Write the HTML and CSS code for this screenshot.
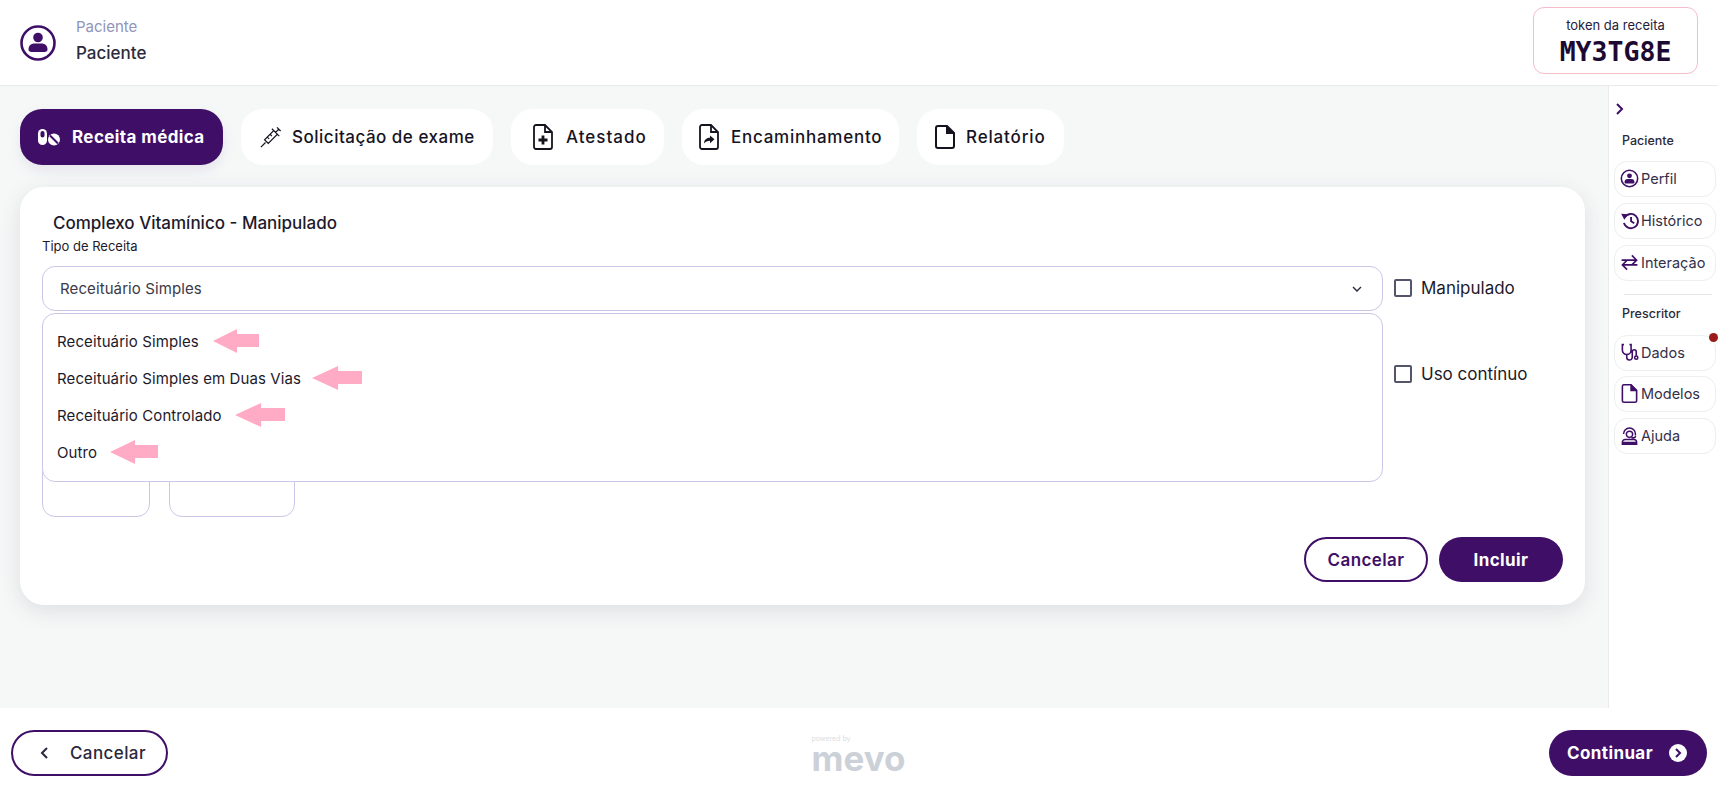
FILE: index.html
```html
<!DOCTYPE html>
<html lang="pt-BR">
<head>
<meta charset="utf-8">
<title>Receita</title>
<link rel="stylesheet" href="styles.css">
</head>
<body>
<header class="topbar">
  <div class="patient">
    <svg class="patient-icon" viewBox="0 0 36 36"><circle cx="18" cy="18" r="16.500" fill="none" stroke="#3f0f68" stroke-width="2.600"/><circle cx="18" cy="12.500" r="4.800" fill="#3f0f68"/><path d="M8.500 24.500c0-4 2.600-6 6-6h7c3.400 0 6 2 6 6 0 1.600-1.200 2.500-3 2.500H11.500c-1.800 0-3-.9-3-2.500z" fill="#3f0f68"/></svg>
    <div class="patient-text">
      <span class="patient-label">Paciente</span>
      <span class="patient-name">Paciente</span>
    </div>
  </div>
  <div class="token">
    <span class="token-label">token da receita</span>
    <span class="token-code">MY3TG8E</span>
  </div>
</header>

<div class="middle">
  <main class="content">
    <nav class="tabs">
      <a class="tab tab-active tab-receita">
        <svg class="tab-icon tab-pill" viewBox="0 0 24 18"><path d="M1 5.500a4.500 4.500 0 0 1 9 0v7a4.500 4.500 0 0 1-9 0z" fill="#fff"/><rect x="3.500" y="3" width="4" height="6.500" rx="2" fill="#3f0f68"/><circle cx="17" cy="11.500" r="6" fill="#fff"/><path d="M13 7.500l8 8" stroke="#3f0f68" stroke-width="2"/></svg>
        Receita médica
      </a>
      <a class="tab tab-sol">
        <svg class="tab-icon" viewBox="0 0 24 24" fill="none" stroke="#16131f" stroke-width="1.300"><path d="M1 23l5-5M5 15l4 4L19 9l-4-4zM13 3l8 8M18.500 1.500l4 4M17 7l3.500-3.500M8 12l2 2M11 9l2 2"/></svg>
        Solicitação de exame
      </a>
      <a class="tab tab-ates">
        <svg class="tab-icon tab-doc" viewBox="0 0 20 26" fill="none" stroke="#16131f" stroke-width="1.800"><path d="M3 1h9l7 7v15a2 2 0 0 1-2 2H3a2 2 0 0 1-2-2V3a2 2 0 0 1 2-2z"/><path d="M12 1v7h7"/><path d="M10 11.500v9M5.500 16h9" stroke-width="2.800"/></svg>
        Atestado
      </a>
      <a class="tab tab-enc">
        <svg class="tab-icon tab-doc" viewBox="0 0 20 26" fill="none" stroke="#16131f" stroke-width="1.800"><path d="M3 1h9l7 7v15a2 2 0 0 1-2 2H3a2 2 0 0 1-2-2V3a2 2 0 0 1 2-2z"/><path d="M12 1v7h7"/><path d="M5 19c.4-3.600 3-5.200 6-5.200v-2.400l4.500 3.900-4.500 3.900v-2.400c-2.600 0-4.600.8-6 2.600z" fill="#16131f" stroke="none"/></svg>
        Encaminhamento
      </a>
      <a class="tab tab-rel">
        <svg class="tab-icon tab-doc" viewBox="0 0 20 24" fill="none" stroke="#16131f" stroke-width="2"><path d="M3 1h9l7 7v13a2 2 0 0 1-2 2H3a2 2 0 0 1-2-2V3a2 2 0 0 1 2-2z"/><path d="M12 1v7h7" fill="#16131f"/></svg>
        Relatório
      </a>
    </nav>

    <section class="card">
      <h1 class="card-title">Complexo Vitamínico - Manipulado</h1>
      <label class="field-label">Tipo de Receita</label>
      <div class="form-row">
        <div class="select">
          <span>Receituário Simples</span>
          <svg class="select-chevron" viewBox="0 0 10 6" fill="none" stroke="#2a2740" stroke-width="1.400"><path d="M1 1l4 4 4-4"/></svg>
          <ul class="dropdown">
            <li class="option">Receituário Simples<svg class="arrow arrow-a" viewBox="0 0 46 24" preserveAspectRatio="none"><path d="M0 12L24 0v5h22v13H24v6z" fill="#ffabc6"/></svg></li>
            <li class="option">Receituário Simples em Duas Vias<svg class="arrow arrow-b" viewBox="0 0 46 24" preserveAspectRatio="none"><path d="M0 12L24 0v5h22v13H24v6z" fill="#ffabc6"/></svg></li>
            <li class="option">Receituário Controlado<svg class="arrow arrow-c" viewBox="0 0 46 24" preserveAspectRatio="none"><path d="M0 12L24 0v5h22v13H24v6z" fill="#ffabc6"/></svg></li>
            <li class="option">Outro<svg class="arrow arrow-d" viewBox="0 0 46 24" preserveAspectRatio="none"><path d="M0 12L24 0v5h22v13H24v6z" fill="#ffabc6"/></svg></li>
          </ul>
        </div>
        <label class="check"><span class="check-box"></span>Manipulado</label>
      </div>
      <div class="form-row form-row-second">
        <div class="select select-blank"></div>
        <label class="check"><span class="check-box"></span>Uso contínuo</label>
      </div>
      <div class="small-fields">
        <div class="small-field small-field-a"></div>
        <div class="small-field small-field-b"></div>
      </div>
      <div class="actions">
        <button class="btn btn-outline">Cancelar</button>
        <button class="btn btn-solid">Incluir</button>
      </div>
    </section>
  </main>

  <aside class="sidebar">
    <svg class="side-toggle" viewBox="0 0 10 14" fill="none" stroke="#3f0f68" stroke-width="2"><path d="M2 2l5 5-5 5"/></svg>
    <h2 class="side-title">Paciente</h2>
    <a class="side-btn">
      <svg class="side-icon" viewBox="0 0 36 36"><circle cx="18" cy="18" r="15.500" fill="none" stroke="#3f0f68" stroke-width="3"/><circle cx="18" cy="13" r="4.600" fill="#3f0f68"/><path d="M8.500 25c0-4 2.600-6 6-6h7c3.400 0 6 2 6 6 0 1.600-1.200 2.500-3 2.500H11.500c-1.800 0-3-.9-3-2.500z" fill="#3f0f68"/></svg>
      <span>Perfil</span>
    </a>
    <a class="side-btn">
      <svg class="side-icon" viewBox="0 0 24 24" fill="none" stroke="#3f0f68" stroke-width="2.400"><path d="M6 8a9 9 0 1 1-1 7"/><path d="M1.500 3.500L10 4 5.500 11z" fill="#3f0f68" stroke="none"/><path d="M14 7.500V13l4 2.500"/></svg>
      <span>Histórico</span>
    </a>
    <a class="side-btn">
      <svg class="side-icon" viewBox="0 0 24 24" fill="none" stroke="#3f0f68" stroke-width="2"><path d="M2 9h19M15 3l6 6-6 6M22 15H3M9 9l-6 6 6 6"/></svg>
      <span>Interação</span>
    </a>
    <hr class="side-divider">
    <h2 class="side-title side-title-second">Prescritor</h2>
    <a class="side-btn side-btn-alert">
      <svg class="side-icon" viewBox="0 0 24 24" fill="none" stroke="#3f0f68" stroke-width="2"><path d="M5 2H3v7a5.500 5.500 0 0 0 11 0V2h-2M8.500 14.500V18a3.500 3.500 0 0 0 7 0V11a2.500 2.500 0 0 1 5 0v5"/><circle cx="20.500" cy="18.500" r="2"/></svg>
      <span>Dados</span>
    </a>
    <a class="side-btn">
      <svg class="side-icon" viewBox="0 0 20 24" fill="none" stroke="#3f0f68" stroke-width="2"><path d="M3 1h9l7 7v13a2 2 0 0 1-2 2H3a2 2 0 0 1-2-2V3a2 2 0 0 1 2-2z"/><path d="M12 1v7h7" fill="#3f0f68"/></svg>
      <span>Modelos</span>
    </a>
    <a class="side-btn">
      <svg class="side-icon" viewBox="0 0 24 24" fill="none" stroke="#3f0f68" stroke-width="1.900"><path d="M4.500 10a7.500 7.500 0 0 1 15 0v2M19.500 12.500c0 1.500-1.500 2.500-3 2.500h-2"/><path d="M8 10.500a4 4 0 1 1 8 0 4 4 0 0 1-8 0z"/><path d="M3 23v-2.500a3.500 3.500 0 0 1 3.500-3.500h11a3.500 3.500 0 0 1 3.500 3.500V23zM3 21h18"/></svg>
      <span>Ajuda</span>
    </a>
  </aside>
</div>

<footer class="footer">
  <button class="foot-btn foot-cancel">
    <svg class="foot-chevron" viewBox="0 0 10 14" fill="none" stroke="#2a2740" stroke-width="2"><path d="M8 2L3 7l5 5"/></svg>
    Cancelar
  </button>
  <div class="logo">
    <span class="logo-small">powered by</span>
    <span class="logo-word">mevo</span>
  </div>
  <button class="foot-btn foot-continue">
    Continuar
    <svg class="foot-next" viewBox="0 0 18 18"><circle cx="9" cy="9" r="9" fill="#fff"/><path d="M7 5l4 4-4 4" fill="none" stroke="#3f0f68" stroke-width="2"/></svg>
  </button>
</footer>
</body>
</html>
```

FILE: styles.css
```css
* { box-sizing: border-box; }
html, body { margin: 0; height: 100%; }
body {
  display: flex;
  flex-direction: column;
  height: 798px;
  overflow: hidden;
  background: #fff;
  color: #16131f;
  font-family: Inter, "Liberation Sans", sans-serif;
}
ul { margin: 0; padding: 0; list-style: none; }
h1, h2 { margin: 0; }
button { font-family: inherit; cursor: pointer; }

.topbar {
  height: 86px;
  flex: none;
  display: flex;
  align-items: center;
  justify-content: space-between;
  padding: 0 20px 0 20px;
  border-bottom: 1px solid #e9ebeb;
}
.patient { display: flex; align-items: center; gap: 20px; }
.patient-icon { width: 36px; height: 36px; }
.patient-text { display: flex; flex-direction: column; gap: 8px; margin-top: -6px; }
.patient-label { font-size: 15px; line-height: 18px; color: #9094b8; }
.patient-name { font-size: 17px; line-height: 18px; font-weight: 500; color: #2c2a3a; }
.token {
  width: 165px;
  height: 67px;
  margin-top: -5px;
  padding-top: 4px;
  display: flex;
  flex-direction: column;
  align-items: center;
  justify-content: center;
  gap: 3px;
  border: 1px solid #f7bcc9;
  border-radius: 11px;
}
.token-label { font-size: 13px; line-height: 17px; color: #251b3c; }
.token-code {
  font-family: "DejaVu Sans Mono", monospace;
  font-size: 26.500px;
  line-height: 30px;
  font-weight: 700;
  color: #1d0a33;
}

.middle { flex: 1; display: flex; min-height: 0; }
.content {
  flex: 1;
  min-width: 0;
  background: #f6f8f8;
  padding: 23px 23px 0 20px;
}
.tabs { display: flex; gap: 18px; height: 56px; }
.tab {
  display: flex;
  align-items: center;
  height: 56px;
  border-radius: 22px;
  background: #fff;
  font-size: 17px;
  letter-spacing: .5px;
  font-weight: 500;
  white-space: nowrap;
}
.tab-icon { width: 22px; height: 24px; flex: none; }
.tab-doc { width: 20px; height: 26px; }
.tab-pill { width: 24px; height: 18px; }
.tab-active {
  background: #3f0f68;
  color: #fff;
  font-weight: 700;
  box-shadow: 0 6px 14px rgba(63, 15, 104, .08);
}
.tab-receita { width: 203px; padding-left: 17px; gap: 11px; letter-spacing: .4px; }
.tab-sol { width: 252px; padding-left: 19px; gap: 10px; }
.tab-ates { width: 153px; padding-left: 22px; gap: 13px; letter-spacing: 1px; }
.tab-enc { width: 217px; padding-left: 17px; gap: 12px; letter-spacing: .75px; }
.tab-rel { width: 147px; padding-left: 18px; gap: 11px; letter-spacing: .85px; }

.card {
  margin-top: 22px;
  height: 418px;
  padding: 25px 22px 24px;
  background: #fff;
  border-radius: 24px;
  box-shadow: 0 6px 22px rgba(40, 44, 60, .12);
}
.card-title { padding-left: 11px; font-size: 17px; line-height: 22px; font-weight: 500; color: #1d1a2b; }
.field-label { display: block; margin-top: 4px; font-size: 13px; line-height: 16px; color: #1d1a2b; }
.form-row {
  display: grid;
  grid-template-columns: 1fr 169px;
  gap: 11px;
  margin-top: 12px;
  height: 45px;
}
.form-row-second { margin-top: 41px; }
.select {
  position: relative;
  display: flex;
  align-items: center;
  justify-content: space-between;
  padding: 0 20px 0 17px;
  border: 1px solid #cdc6e8;
  border-radius: 13px;
  font-size: 15px;
  letter-spacing: .1px;
  color: #3b3948;
}
.select-chevron { width: 10px; height: 6px; }
.dropdown {
  position: absolute;
  z-index: 2;
  left: -1px;
  right: -1px;
  top: 46px;
  height: 169px;
  padding: 9px 14px;
  background: #fff;
  border: 1px solid #cdc6e8;
  border-radius: 13px;
  color: #1d1a2b;
}
.option { position: relative; height: 37px; line-height: 37px; white-space: nowrap; }
.arrow { position: absolute; top: 6px; width: 46px; height: 24px; }
.arrow-a { left: 156px; }
.arrow-b { left: 255px; width: 50px; }
.arrow-c { left: 178px; width: 50px; }
.arrow-d { left: 53px; width: 48px; }
.check { display: flex; align-items: center; gap: 9px; padding-bottom: 2px; font-size: 17px; color: #1d1a2b; }
.check-box { width: 18px; height: 18px; border: 2px solid #54546a; border-radius: 2px; }
.small-fields { display: flex; gap: 19px; margin-top: 59px; height: 61px; }
.small-field { height: 61px; border: 1px solid #cdc6e8; border-radius: 13px; }
.small-field-a { width: 108px; }
.small-field-b { width: 126px; }
.actions { display: flex; justify-content: flex-end; gap: 11px; margin-top: 20px; }
.btn { width: 124px; height: 45px; border-radius: 23px; font-size: 17px; letter-spacing: .4px; font-weight: 600; }
.btn-outline { background: #fff; border: 2px solid #3f0f68; color: #3f0f68; }
.btn-solid { background: #3f0f68; border: 0; color: #fff; font-weight: 700; }

.sidebar {
  width: 110px;
  flex: none;
  position: relative;
  padding: 16px 2px 0 5px;
  background: #fff;
  border-left: 1px solid #e9ebeb;
}
.side-toggle { display: block; width: 10px; height: 14px; margin-left: 1px; }
.side-title { margin: 17px 0 12px 8px; font-size: 12.500px; line-height: 16px; font-weight: 500; color: #2c2a3a; }
.side-title-second { margin-top: 0; margin-bottom: 13px; }
.side-btn {
  display: flex;
  align-items: center;
  gap: 2px;
  height: 36px;
  margin-bottom: 6px;
  padding: 0 0 2px 5px;
  border: 1px solid #eceef0;
  border-radius: 13px;
  font-size: 14.500px;
  color: #33304a;
}
.side-icon { width: 19px; height: 19px; flex: none; }
.side-btn-alert { position: relative; margin-bottom: 5px; }
.side-btn-alert::after {
  content: "";
  position: absolute;
  top: -3px;
  right: -3px;
  width: 9px;
  height: 9px;
  border-radius: 50%;
  background: #9c1a1a;
}
.side-divider { height: 1px; margin: 13px 4px 11px 10px; border: 0; background: #e6e6ea; }

.footer {
  height: 90px;
  flex: none;
  display: flex;
  align-items: center;
  justify-content: space-between;
  padding: 0 11px;
  background: #fff;
}
.foot-btn {
  display: flex;
  align-items: center;
  height: 46px;
  border-radius: 23px;
  font-size: 17px;
  letter-spacing: .4px;
}
.foot-cancel { width: 157px; gap: 21px; padding-left: 26px; background: #fff; border: 2px solid #3f0f68; color: #2a2740; font-weight: 500; }
.foot-chevron { width: 10px; height: 14px; }
.foot-continue { width: 158px; gap: 16px; padding-left: 18px; background: #3f0f68; border: 0; color: #fff; font-weight: 700; }
.foot-next { width: 18px; height: 18px; }
.logo { display: flex; flex-direction: column; align-items: flex-start; color: #ccd1d8; }
.logo-small { font-size: 7px; line-height: 9px; color: #d9dde2; }
.logo-word { font-size: 35px; line-height: 30px; font-weight: 700; }
```
